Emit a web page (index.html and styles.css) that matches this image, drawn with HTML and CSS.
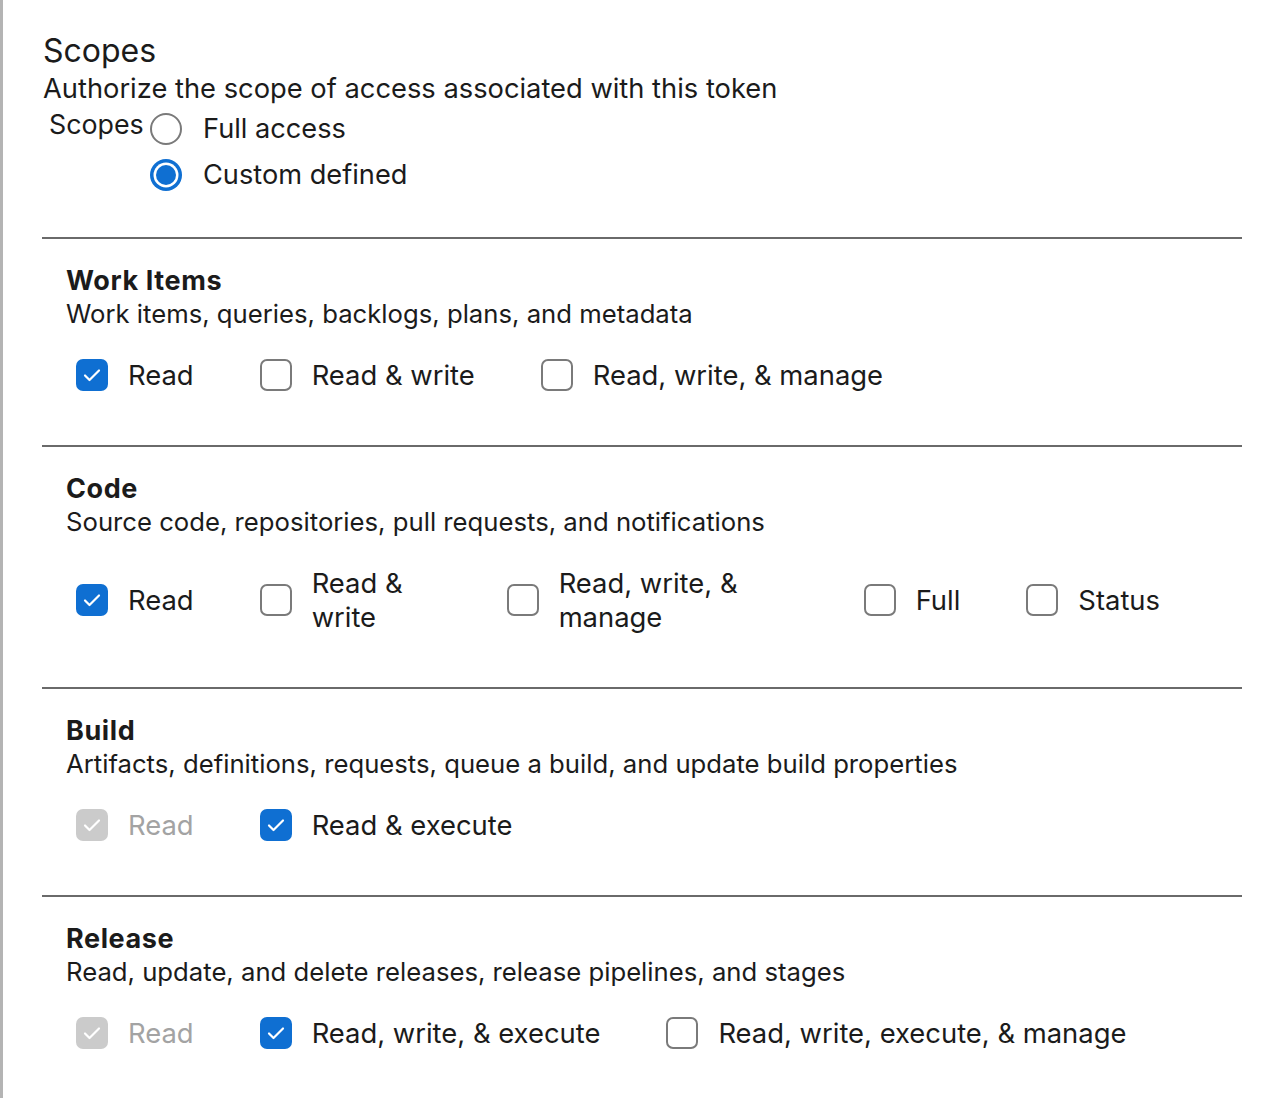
FILE: index.html
```html
<!DOCTYPE html>
<html lang="en">
<head>
<meta charset="utf-8">
<title>Scopes</title>
<link rel="stylesheet" href="styles.css">
</head>
<body>
<div class="page">
  <div class="intro">
    <h2 class="title">Scopes</h2>
    <p class="subtitle">Authorize the scope of access associated with this token</p>
    <div class="scope-field">
      <span class="field-label">Scopes</span>
      <div class="radio-group">
        <div class="radio-row"><span class="radio"></span><span class="radio-text">Full access</span></div>
        <div class="radio-row"><span class="radio radio--on"><span class="dot"></span></span><span class="radio-text">Custom defined</span></div>
      </div>
    </div>
  </div>

  <section class="scope">
    <h3 class="scope-name">Work Items</h3>
    <p class="scope-desc">Work items, queries, backlogs, plans, and metadata</p>
    <div class="options">
      <div class="opt"><span class="cb cb--on"><svg viewBox="0 0 32 32"><path d="M9 16.5l4.5 4.5L23 11.5"/></svg></span><span class="opt-text">Read</span></div>
      <div class="opt"><span class="cb"></span><span class="opt-text">Read &amp; write</span></div>
      <div class="opt"><span class="cb"></span><span class="opt-text">Read, write, &amp; manage</span></div>
    </div>
  </section>

  <section class="scope">
    <h3 class="scope-name">Code</h3>
    <p class="scope-desc">Source code, repositories, pull requests, and notifications</p>
    <div class="options">
      <div class="opt"><span class="cb cb--on"><svg viewBox="0 0 32 32"><path d="M9 16.5l4.5 4.5L23 11.5"/></svg></span><span class="opt-text">Read</span></div>
      <div class="opt"><span class="cb"></span><span class="opt-text opt-text--narrow">Read &amp; write</span></div>
      <div class="opt"><span class="cb"></span><span class="opt-text opt-text--mid">Read, write, &amp; manage</span></div>
      <div class="opt"><span class="cb"></span><span class="opt-text">Full</span></div>
      <div class="opt"><span class="cb"></span><span class="opt-text">Status</span></div>
    </div>
  </section>

  <section class="scope">
    <h3 class="scope-name">Build</h3>
    <p class="scope-desc">Artifacts, definitions, requests, queue a build, and update build properties</p>
    <div class="options">
      <div class="opt opt--disabled"><span class="cb cb--dis"><svg viewBox="0 0 32 32"><path d="M9 16.5l4.5 4.5L23 11.5"/></svg></span><span class="opt-text">Read</span></div>
      <div class="opt"><span class="cb cb--on"><svg viewBox="0 0 32 32"><path d="M9 16.5l4.5 4.5L23 11.5"/></svg></span><span class="opt-text">Read &amp; execute</span></div>
    </div>
  </section>

  <section class="scope">
    <h3 class="scope-name">Release</h3>
    <p class="scope-desc">Read, update, and delete releases, release pipelines, and stages</p>
    <div class="options">
      <div class="opt opt--disabled"><span class="cb cb--dis"><svg viewBox="0 0 32 32"><path d="M9 16.5l4.5 4.5L23 11.5"/></svg></span><span class="opt-text">Read</span></div>
      <div class="opt"><span class="cb cb--on"><svg viewBox="0 0 32 32"><path d="M9 16.5l4.5 4.5L23 11.5"/></svg></span><span class="opt-text">Read, write, &amp; execute</span></div>
      <div class="opt"><span class="cb"></span><span class="opt-text">Read, write, execute, &amp; manage</span></div>
    </div>
  </section>
</div>
</body>
</html>
```

FILE: styles.css
```css
html, body {
  margin: 0;
  padding: 0;
  background: #ffffff;
}

body {
  font-family: Inter, "Liberation Sans", sans-serif;
  color: #1b1b1b;
  height: 1098px;
  overflow: hidden;
}

.page {
  min-height: 1098px;
  box-sizing: border-box;
  border-left: 3px solid #b4b4b4;
  padding: 0 40px 0 39px;
}

.intro {
  padding-top: 31px;
  padding-bottom: 39px;
  border-bottom: 2px solid #6a6a6a;
  padding-left: 1px;
}

.title {
  margin: 0;
  font-size: 32px;
  line-height: 40px;
  font-weight: 400;
}

.subtitle {
  margin: 0;
  font-size: 27.3px;
  line-height: 36px;
}

.scope-field {
  display: flex;
  align-items: flex-start;
  margin-top: -1px;
}

.field-label {
  font-size: 26.8px;
  line-height: 36px;
  padding-left: 6px;
  width: 101px;
}

.radio-group {
  display: flex;
  flex-direction: column;
}

.radio-row {
  height: 46px;
  display: flex;
  align-items: center;
  gap: 21px;
}

.radio {
  width: 32px;
  height: 32px;
  box-sizing: border-box;
  border: 2px solid #7a7a7a;
  border-radius: 50%;
  display: flex;
  align-items: center;
  justify-content: center;
}

.radio--on {
  border: none;
  background: #0f6fd2;
}

.dot {
  width: 20px;
  height: 20px;
  border-radius: 50%;
  background: #0f6fd2;
  box-shadow: 0 0 0 2.5px #ffffff;
}

.radio-text {
  font-size: 27.2px;
  line-height: 36px;
}

.scope {
  padding: 25px 0 53px 24px;
  border-bottom: 2px solid #6a6a6a;
}

.scope:last-child {
  border-bottom: none;
}

.scope-name {
  margin: 0;
  font-size: 27px;
  letter-spacing: 0.6px;
  line-height: 34px;
  font-weight: 700;
}

.scope-desc {
  margin: 0;
  font-size: 25.7px;
  line-height: 34px;
  margin-top: -1px;
}

.options {
  display: flex;
  align-items: center;
  gap: 66px;
  margin-top: 27px;
  padding-left: 10px;
}

.opt {
  display: flex;
  align-items: center;
  gap: 20px;
}

.opt-text {
  font-size: 27.4px;
  line-height: 34px;
}

.opt-text--narrow {
  width: 129px;
}

.opt-text--mid {
  width: 239px;
}

.cb {
  flex: none;
  width: 32px;
  height: 32px;
  box-sizing: border-box;
  border: 2px solid #7a7a7a;
  border-radius: 7px;
  display: flex;
}

.cb svg {
  width: 32px;
  height: 32px;
  flex: none;
}

.cb path {
  fill: none;
  stroke: #ffffff;
  stroke-width: 2.2;
  stroke-linecap: round;
  stroke-linejoin: round;
}

.cb--on {
  border: none;
  background: #0f6fd2;
}

.cb--dis {
  border: none;
  background: #cbcbcb;
}

.opt--disabled .opt-text {
  color: #a3a3a3;
}
```
